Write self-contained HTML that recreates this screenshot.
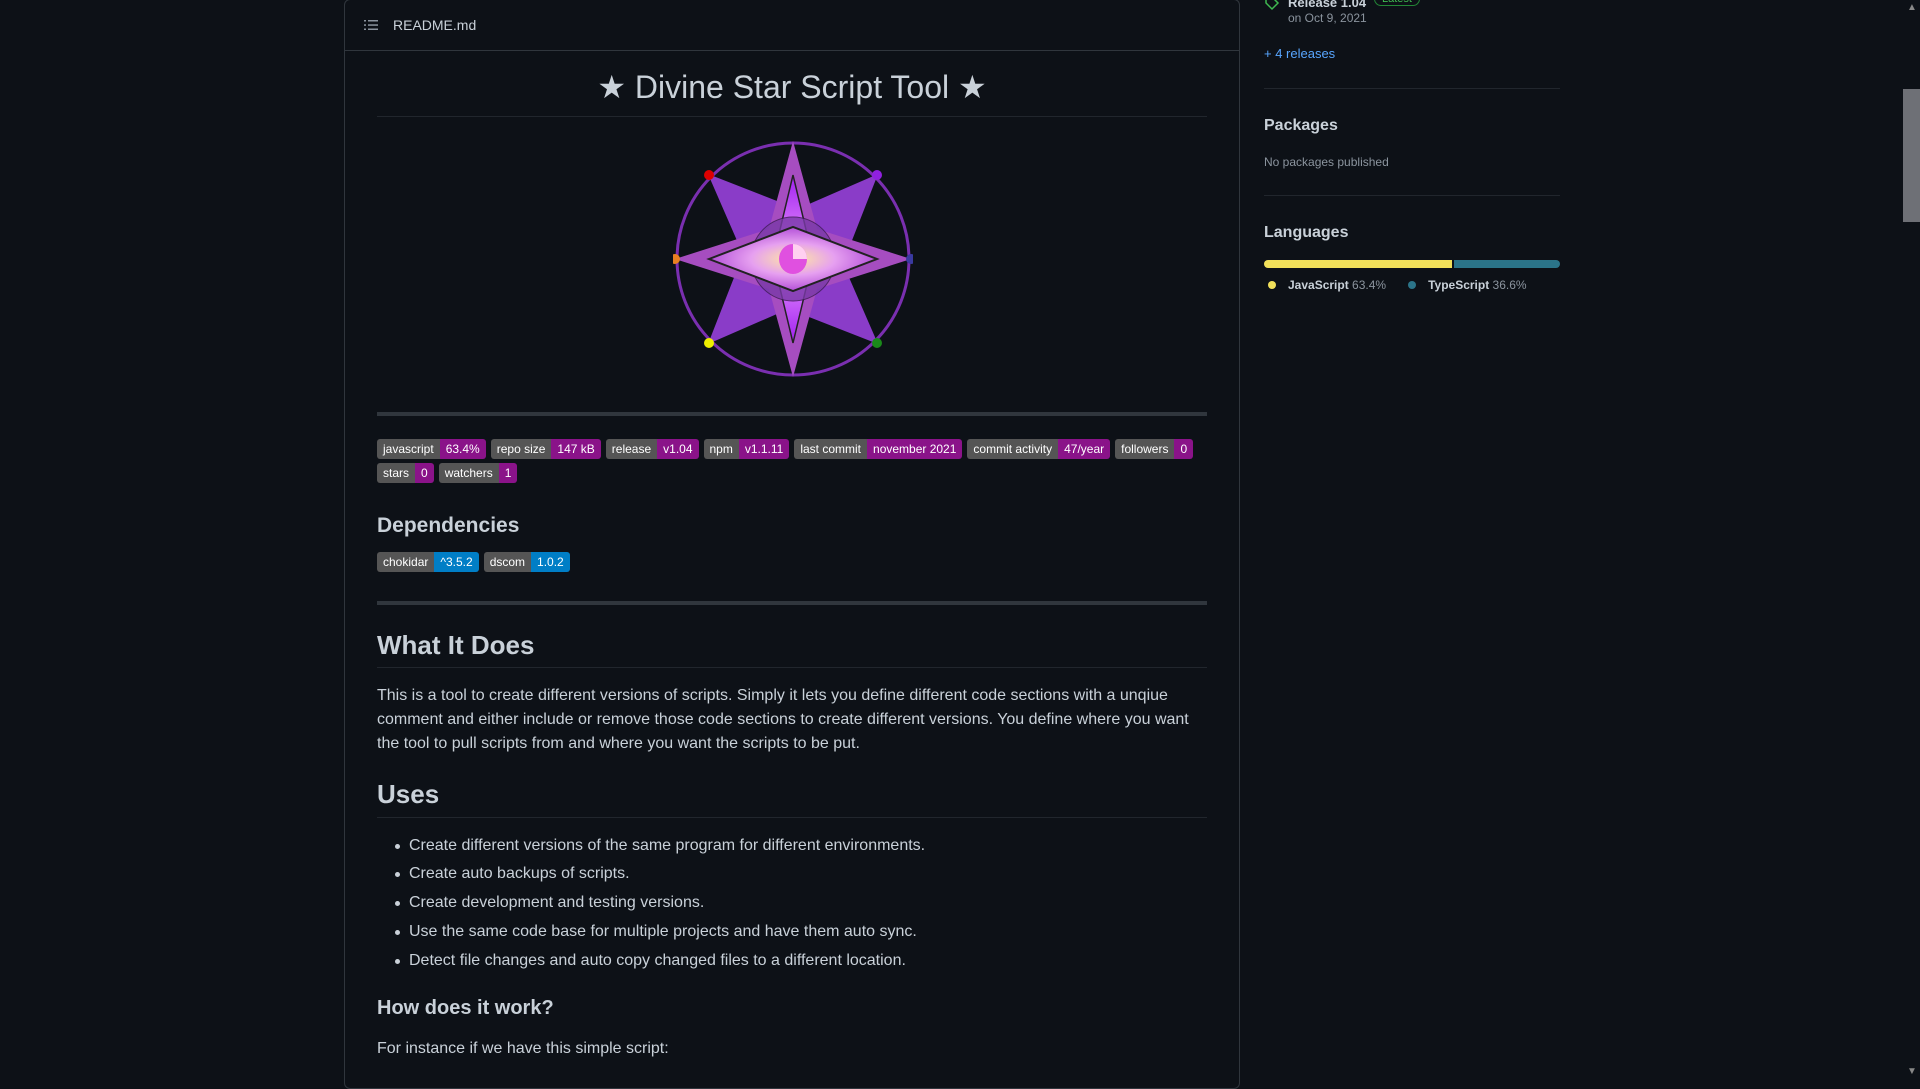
<!DOCTYPE html>
<html><head><meta charset="utf-8"><style>
*{box-sizing:border-box;margin:0;padding:0}
body{width:1920px;height:1080px;overflow:hidden;background:#0d1117;color:#c9d1d9;font-family:"Liberation Sans",sans-serif;position:relative}
.box{position:absolute;left:344px;top:-1px;width:896px;height:1090px;border:1px solid #30363d;border-radius:6px}
.hdr{height:51px;border-bottom:1px solid #30363d;display:flex;align-items:center;padding-left:18px;font-size:14px;color:#c9d1d9}
.c{position:absolute;left:32px;width:830px}
h1{font-size:32px;font-weight:400;text-align:center;color:#c9d1d9}
.rule{position:absolute;left:32px;width:830px;height:1px;background:#21262d}
.thick{position:absolute;left:32px;width:830px;height:4px;background:#30363d}
.badges{display:flex;flex-wrap:wrap;gap:4px 5px;font-size:12px}
.b{display:flex;height:20px;line-height:20px;border-radius:3px;overflow:hidden;color:#fff}
.b span:first-child{background:#555;padding:0 6px}
.b span:last-child{padding:0 6px}
.p span:last-child{background:#8a1389}
.bl span:last-child{background:#007ec6}
h2{font-weight:400;color:#c9d1d9}
p,li{font-size:16px;line-height:24px}
ul{list-style:none}
li{position:absolute;left:32px;padding-left:32px}
li:before{content:"";position:absolute;left:18px;top:10px;width:5px;height:5px;border-radius:50%;background:#c9d1d9}
.side{position:absolute;left:1264px;width:296px}
.sh{font-size:16px;font-weight:700;color:#c9d1d9}
.sr{height:1px;background:#21262d;position:absolute;left:1264px;width:296px}
</style></head><body>
<div class="box">
 <div class="hdr"><svg width="16" height="16" viewBox="0 0 16 16" fill="#8b949e"><rect x="1" y="3" width="2" height="1.5"/><rect x="5" y="3" width="10" height="1.5"/><rect x="1" y="7.3" width="2" height="1.5"/><rect x="5" y="7.3" width="10" height="1.5"/><rect x="1" y="11.5" width="2" height="1.5"/><rect x="5" y="11.5" width="10" height="1.5"/></svg><span style="margin-left:14px">README.md</span></div>
 <h1 class="c" style="top:68px">★ Divine Star Script Tool ★</h1>
 <div class="rule" style="top:116px"></div>
 <svg style="position:absolute;left:328px;top:139px" width="240" height="240" viewBox="-120 -120 240 240">
  <defs><radialGradient id="g"><stop offset="0" stop-color="#ffe9a0"/><stop offset=".5" stop-color="#e6a0f0"/><stop offset="1" stop-color="#b34fd8"/></radialGradient><linearGradient id="v" x1="0" y1="0" x2="0" y2="1"><stop offset="0" stop-color="#a020f0"/><stop offset=".5" stop-color="#f0a0ff"/><stop offset="1" stop-color="#a020f0"/></linearGradient></defs>
  <circle r="116" fill="none" stroke="#7a2fb0" stroke-width="3"/>
  <polygon points="-85,-85 -40,-30 -85,85 -30,40 85,85 40,30 85,-85 30,-40" fill="#8a3cc8"/>
  <polygon points="-85,-85 -48,0 -85,85 0,48 85,85 48,0 85,-85 0,-48" fill="#8a3cc8"/>
  <polygon points="0,-118 24,-30 118,0 24,30 0,118 -24,30 -118,0 -24,-30" fill="#a64dc0"/>
  <polygon points="0,-84 20,0 0,84 -20,0" fill="url(#v)" stroke="#222" stroke-width="1.5"/>
  <circle r="42" fill="#7a3aa8" stroke="#3a1a50" opacity=".8"/>
  <polygon points="-84,0 0,-32 84,0 0,32" fill="url(#g)" stroke="#222" stroke-width="2"/>
  <ellipse rx="14" ry="15" fill="#e050e0"/><path d="M0,-15 A14,15 0 0 1 14,0 L0,0Z" fill="#ffd0f0"/>
  <circle cx="-84" cy="-84" r="5" fill="#d00"/><circle cx="84" cy="-84" r="5" fill="#9020e0"/><circle cx="-118" cy="0" r="5" fill="#e88020"/><circle cx="118" cy="0" r="5" fill="#3a3aa0"/><circle cx="-84" cy="84" r="5" fill="#ee0"/><circle cx="84" cy="84" r="5" fill="#1a8a1a"/>
 </svg>
 <div class="thick" style="top:412px"></div>
 <div class="c badges" style="top:439px">
  <div class="b p"><span>javascript</span><span>63.4%</span></div>
  <div class="b p"><span>repo size</span><span>147 kB</span></div>
  <div class="b p"><span>release</span><span>v1.04</span></div>
  <div class="b p"><span>npm</span><span>v1.1.11</span></div>
  <div class="b p"><span>last commit</span><span>november 2021</span></div>
  <div class="b p"><span>commit activity</span><span>47/year</span></div>
  <div class="b p"><span>followers</span><span>0</span></div>
  <div class="b p"><span>stars</span><span>0</span></div>
  <div class="b p"><span>watchers</span><span>1</span></div>
 </div>
 <h2 class="c" style="top:514px;font-size:21px;font-weight:600">Dependencies</h2>
 <div class="c badges" style="top:552px">
  <div class="b bl"><span>chokidar</span><span>^3.5.2</span></div>
  <div class="b bl"><span>dscom</span><span>1.0.2</span></div>
 </div>
 <div class="thick" style="top:601px"></div>
 <h2 class="c" style="top:630px;font-size:26px;font-weight:600">What It Does</h2>
 <div class="rule" style="top:667px"></div>
 <p class="c" style="top:684px">This is a tool to create different versions of scripts. Simply it lets you define different code sections with a unqiue comment and either include or remove those code sections to create different versions. You define where you want the tool to pull scripts from and where you want the scripts to be put.</p>
 <h2 class="c" style="top:779px;font-size:26px;font-weight:600">Uses</h2>
 <div class="rule" style="top:817px"></div>
 <ul>
  <li style="top:834px">Create different versions of the same program for different environments.</li>
  <li style="top:862px">Create auto backups of scripts.</li>
  <li style="top:891px">Create development and testing versions.</li>
  <li style="top:920px">Use the same code base for multiple projects and have them auto sync.</li>
  <li style="top:949px">Detect file changes and auto copy changed files to a different location.</li>
 </ul>
 <h2 class="c" style="top:997px;font-size:20px;font-weight:600">How does it work?</h2>
 <p class="c" style="top:1037px">For instance if we have this simple script:</p>
</div>
<div class="side" style="top:-8px;font-size:13px"><svg width="16" height="16" viewBox="0 0 16 16" style="position:absolute;left:0;top:3px"><path d="M2 2h6l6 6-6 6-6-6z" fill="none" stroke="#3fb950" stroke-width="1.5"/></svg><span style="position:absolute;left:24px;top:3px;font-weight:700">Release 1.04</span><span style="position:absolute;left:110px;top:0;border:1px solid #238636;color:#3fb950;border-radius:10px;padding:0 7px;font-size:11px">Latest</span></div>
<div class="side" style="top:11px;left:1288px;font-size:12px;color:#8b949e">on Oct 9, 2021</div>
<div class="side" style="top:46px;font-size:13px;color:#58a6ff">+ 4 releases</div>
<div class="sr" style="top:88px"></div>
<div class="side sh" style="top:117px">Packages</div>
<div class="side" style="top:155px;font-size:12px;color:#8b949e">No packages published</div>
<div class="sr" style="top:195px"></div>
<div class="side sh" style="top:224px">Languages</div>
<div class="side" style="top:260px;height:8px;border-radius:4px;overflow:hidden;display:flex"><div style="width:63.4%;background:#f1e05a;margin-right:2px"></div><div style="flex:1;background:#2b7489"></div></div>
<div class="side" style="top:278px;font-size:12px;color:#c9d1d9"><span style="display:inline-block;width:8px;height:8px;border-radius:50%;background:#f1e05a;margin:0 12px 0 4px"></span><b style="font-weight:600">JavaScript</b> <span style="color:#8b949e">63.4%</span><span style="display:inline-block;width:8px;height:8px;border-radius:50%;background:#2b7489;margin:0 12px 0 22px"></span><b style="font-weight:600">TypeScript</b> <span style="color:#8b949e">36.6%</span></div>
<div style="position:absolute;left:1903px;top:0;width:17px;height:1080px;background:#0d1117"></div>
<div style="position:absolute;left:1903px;top:89px;width:17px;height:133px;background:#6e7076"></div>
<div style="position:absolute;left:1907px;top:2px;color:#888;font-size:10px">▲</div>
<div style="position:absolute;left:1907px;top:1066px;color:#888;font-size:10px">▼</div>
</body></html>
